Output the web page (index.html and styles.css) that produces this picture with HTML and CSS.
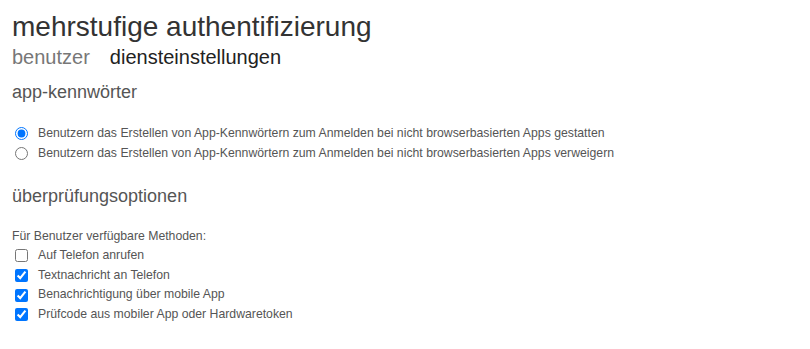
FILE: index.html
```html
<!DOCTYPE html>
<html lang="de">
<head>
<meta charset="utf-8">
<title>mehrstufige authentifizierung</title>
<link rel="stylesheet" href="styles.css">
</head>
<body>
<div class="page">
  <h1 class="title">mehrstufige authentifizierung</h1>
  <nav class="tabs">
    <span class="tab">benutzer</span>
    <span class="tab tab-active">diensteinstellungen</span>
  </nav>

  <section class="section section-app">
    <h2 class="section-title">app-kennwörter</h2>
    <div class="options">
      <label class="option"><input type="radio" name="apppw" checked><span>Benutzern das Erstellen von App-Kennwörtern zum Anmelden bei nicht browserbasierten Apps gestatten</span></label>
      <label class="option"><input type="radio" name="apppw"><span>Benutzern das Erstellen von App-Kennwörtern zum Anmelden bei nicht browserbasierten Apps verweigern</span></label>
    </div>
  </section>

  <section class="section section-verify">
    <h2 class="section-title">überprüfungsoptionen</h2>
    <div class="options options-verify">
      <div class="caption">Für Benutzer verfügbare Methoden:</div>
      <label class="option"><input type="checkbox"><span>Auf Telefon anrufen</span></label>
      <label class="option"><input type="checkbox" checked><span>Textnachricht an Telefon</span></label>
      <label class="option"><input type="checkbox" checked><span>Benachrichtigung über mobile App</span></label>
      <label class="option"><input type="checkbox" checked><span>Prüfcode aus mobiler App oder Hardwaretoken</span></label>
    </div>
  </section>
</div>
</body>
</html>
```
FILE: styles.css
```css
html, body {
  margin: 0;
  padding: 0;
  background: #ffffff;
}

body {
  font-family: "Liberation Sans", Arial, sans-serif;
  color: #555555;
}

.page {
  padding: 11px 12px 0 12px;
}

.title {
  margin: 0;
  font-size: 28px;
  line-height: 32px;
  font-weight: normal;
  color: #333333;
}

.tabs {
  display: flex;
  gap: 20px;
  margin-top: 2px;
  font-size: 20px;
  line-height: 24px;
}

.tab {
  color: #777777;
}

.tab-active {
  color: #222222;
}

.section-title {
  margin: 0;
  font-size: 18px;
  line-height: 22px;
  font-weight: normal;
  color: #555555;
}

.section-app {
  margin-top: 12px;
}

.section-verify {
  margin-top: 22px;
}

.options {
  margin-top: 20px;
  display: flex;
  flex-direction: column;
  font-size: 12.25px;
  line-height: 20px;
}

.options-verify {
  margin-top: 19px;
  line-height: 19.7px;
}

.caption {
  line-height: 20px;
}

.option {
  display: flex;
  align-items: center;
  gap: 10px;
  color: #555555;
}

.option input {
  margin: 0 0 0 3px;
  width: 13px;
  height: 13px;
  flex: none;
}
```
